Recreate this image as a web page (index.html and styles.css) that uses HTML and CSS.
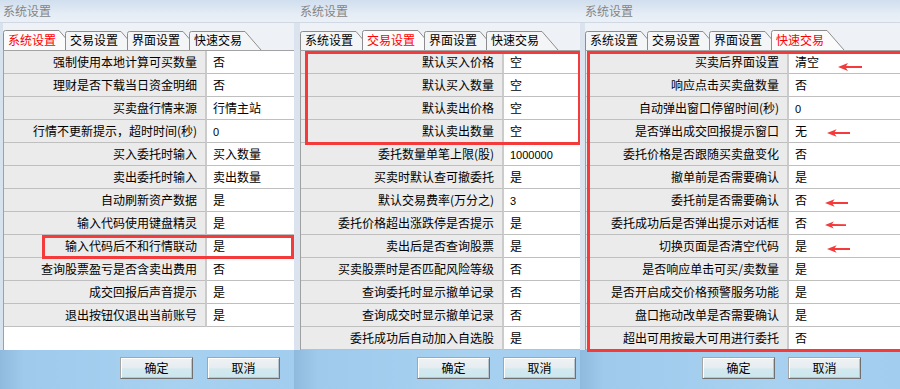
FILE: index.html
```html
<!DOCTYPE html>
<html lang="zh-CN">
<head>
<meta charset="utf-8">
<title>系统设置</title>
<link rel="stylesheet" href="styles.css">
</head>
<body>
<div class="screen">

  <section class="panel p1">
    <div class="titlebar">系统设置</div>
    <div class="body">
      <div class="tabs">
        <div class="tab active"><svg width="74" height="20" viewBox="0 0 74 20"><path class="tf" d="M0.5 20V2.5Q0.5 0.5 2.5 0.5H56L73 20Z"/><path class="ts" d="M0.5 20V2.5Q0.5 0.5 2.5 0.5H56L73 20"/></svg><span>系统设置</span></div>
        <div class="tab"><svg width="74" height="20" viewBox="0 0 74 20"><path class="tf" d="M0.5 20V3.5Q0.5 1.5 2.5 1.5H56L72 20Z"/><path class="ts" d="M0.5 20V3.5Q0.5 1.5 2.5 1.5H56L72 20"/></svg><span>交易设置</span></div>
        <div class="tab"><svg width="74" height="20" viewBox="0 0 74 20"><path class="tf" d="M0.5 20V3.5Q0.5 1.5 2.5 1.5H56L72 20Z"/><path class="ts" d="M0.5 20V3.5Q0.5 1.5 2.5 1.5H56L72 20"/></svg><span>界面设置</span></div>
        <div class="tab"><svg width="74" height="20" viewBox="0 0 74 20"><path class="tf" d="M0.5 20V3.5Q0.5 1.5 2.5 1.5H56L72 20Z"/><path class="ts" d="M0.5 20V3.5Q0.5 1.5 2.5 1.5H56L72 20"/></svg><span>快速交易</span></div>
      </div>
      <div class="list">
        <div class="row"><div class="lbl">强制使用本地计算可买数量</div><div class="val">否</div></div>
        <div class="row"><div class="lbl">理财是否下载当日资金明细</div><div class="val">否</div></div>
        <div class="row"><div class="lbl">买卖盘行情来源</div><div class="val">行情主站</div></div>
        <div class="row"><div class="lbl">行情不更新提示，超时时间(秒)</div><div class="val"><span class="num">0</span></div></div>
        <div class="row"><div class="lbl">买入委托时输入</div><div class="val">买入数量</div></div>
        <div class="row"><div class="lbl">卖出委托时输入</div><div class="val">卖出数量</div></div>
        <div class="row"><div class="lbl">自动刷新资产数据</div><div class="val">是</div></div>
        <div class="row"><div class="lbl">输入代码使用键盘精灵</div><div class="val">是</div></div>
        <div class="row"><div class="lbl">输入代码后不和行情联动</div><div class="val">是</div></div>
        <div class="row"><div class="lbl">查询股票盈亏是否含卖出费用</div><div class="val">否</div></div>
        <div class="row"><div class="lbl">成交回报后声音提示</div><div class="val">是</div></div>
        <div class="row"><div class="lbl">退出按钮仅退出当前账号</div><div class="val">是</div></div>
      </div>
    </div>
    <div class="footer"><button class="btn">确定</button><button class="btn">取消</button></div>
    <div class="box box1"></div>
  </section>

  <section class="panel p2">
    <div class="titlebar">系统设置</div>
    <div class="body">
      <div class="tabs">
        <div class="tab"><svg width="74" height="20" viewBox="0 0 74 20"><path class="tf" d="M0.5 20V3.5Q0.5 1.5 2.5 1.5H56L72 20Z"/><path class="ts" d="M0.5 20V3.5Q0.5 1.5 2.5 1.5H56L72 20"/></svg><span>系统设置</span></div>
        <div class="tab active"><svg width="74" height="20" viewBox="0 0 74 20"><path class="tf" d="M0.5 20V2.5Q0.5 0.5 2.5 0.5H56L73 20Z"/><path class="ts" d="M0.5 20V2.5Q0.5 0.5 2.5 0.5H56L73 20"/></svg><span>交易设置</span></div>
        <div class="tab"><svg width="74" height="20" viewBox="0 0 74 20"><path class="tf" d="M0.5 20V3.5Q0.5 1.5 2.5 1.5H56L72 20Z"/><path class="ts" d="M0.5 20V3.5Q0.5 1.5 2.5 1.5H56L72 20"/></svg><span>界面设置</span></div>
        <div class="tab"><svg width="74" height="20" viewBox="0 0 74 20"><path class="tf" d="M0.5 20V3.5Q0.5 1.5 2.5 1.5H56L72 20Z"/><path class="ts" d="M0.5 20V3.5Q0.5 1.5 2.5 1.5H56L72 20"/></svg><span>快速交易</span></div>
      </div>
      <div class="list">
        <div class="row"><div class="lbl">默认买入价格</div><div class="val">空</div></div>
        <div class="row"><div class="lbl">默认买入数量</div><div class="val">空</div></div>
        <div class="row"><div class="lbl">默认卖出价格</div><div class="val">空</div></div>
        <div class="row"><div class="lbl">默认卖出数量</div><div class="val">空</div></div>
        <div class="row"><div class="lbl">委托数量单笔上限(股)</div><div class="val"><span class="num">1000000</span></div></div>
        <div class="row"><div class="lbl">买卖时默认查可撤委托</div><div class="val">是</div></div>
        <div class="row"><div class="lbl">默认交易费率(万分之)</div><div class="val"><span class="num">3</span></div></div>
        <div class="row"><div class="lbl">委托价格超出涨跌停是否提示</div><div class="val">是</div></div>
        <div class="row"><div class="lbl">卖出后是否查询股票</div><div class="val">是</div></div>
        <div class="row"><div class="lbl">买卖股票时是否匹配风险等级</div><div class="val">否</div></div>
        <div class="row"><div class="lbl">查询委托时显示撤单记录</div><div class="val">否</div></div>
        <div class="row"><div class="lbl">查询成交时显示撤单记录</div><div class="val">否</div></div>
        <div class="row"><div class="lbl">委托成功后自动加入自选股</div><div class="val">是</div></div>
      </div>
    </div>
    <div class="footer"><button class="btn">确定</button><button class="btn">取消</button></div>
    <div class="box box2"></div>
  </section>

  <section class="panel p3">
    <div class="titlebar">系统设置</div>
    <div class="body">
      <div class="tabs">
        <div class="tab"><svg width="74" height="20" viewBox="0 0 74 20"><path class="tf" d="M0.5 20V3.5Q0.5 1.5 2.5 1.5H56L72 20Z"/><path class="ts" d="M0.5 20V3.5Q0.5 1.5 2.5 1.5H56L72 20"/></svg><span>系统设置</span></div>
        <div class="tab"><svg width="74" height="20" viewBox="0 0 74 20"><path class="tf" d="M0.5 20V3.5Q0.5 1.5 2.5 1.5H56L72 20Z"/><path class="ts" d="M0.5 20V3.5Q0.5 1.5 2.5 1.5H56L72 20"/></svg><span>交易设置</span></div>
        <div class="tab"><svg width="74" height="20" viewBox="0 0 74 20"><path class="tf" d="M0.5 20V3.5Q0.5 1.5 2.5 1.5H56L72 20Z"/><path class="ts" d="M0.5 20V3.5Q0.5 1.5 2.5 1.5H56L72 20"/></svg><span>界面设置</span></div>
        <div class="tab active"><svg width="74" height="20" viewBox="0 0 74 20"><path class="tf" d="M0.5 20V2.5Q0.5 0.5 2.5 0.5H56L73 20Z"/><path class="ts" d="M0.5 20V2.5Q0.5 0.5 2.5 0.5H56L73 20"/></svg><span>快速交易</span></div>
      </div>
      <div class="list">
        <div class="row"><div class="lbl">买卖后界面设置</div><div class="val">清空</div></div>
        <div class="row"><div class="lbl">响应点击买卖盘数量</div><div class="val">否</div></div>
        <div class="row"><div class="lbl">自动弹出窗口停留时间(秒)</div><div class="val"><span class="num">0</span></div></div>
        <div class="row"><div class="lbl">是否弹出成交回报提示窗口</div><div class="val">无</div></div>
        <div class="row"><div class="lbl">委托价格是否跟随买卖盘变化</div><div class="val">否</div></div>
        <div class="row"><div class="lbl">撤单前是否需要确认</div><div class="val">是</div></div>
        <div class="row"><div class="lbl">委托前是否需要确认</div><div class="val">否</div></div>
        <div class="row"><div class="lbl">委托成功后是否弹出提示对话框</div><div class="val">否</div></div>
        <div class="row"><div class="lbl">切换页面是否清空代码</div><div class="val">是</div></div>
        <div class="row"><div class="lbl">是否响应单击可买/卖数量</div><div class="val">是</div></div>
        <div class="row"><div class="lbl">是否开启成交价格预警服务功能</div><div class="val">是</div></div>
        <div class="row"><div class="lbl">盘口拖动改单是否需要确认</div><div class="val">是</div></div>
        <div class="row"><div class="lbl">超出可用按最大可用进行委托</div><div class="val">否</div></div>
      </div>
    </div>
    <div class="footer"><button class="btn">确定</button><button class="btn">取消</button></div>
    <div class="box box3"></div>
    <svg class="arrow a1" viewBox="0 0 24 8"><path d="M0 4L10 0L8 2.9L24 3V5L8 5.1L10 8Z"/></svg>
    <svg class="arrow a2" viewBox="0 0 24 8"><path d="M0 4L10 0L8 2.9L24 3V5L8 5.1L10 8Z"/></svg>
    <svg class="arrow a3" viewBox="0 0 24 8"><path d="M0 4L10 0L8 2.9L24 3V5L8 5.1L10 8Z"/></svg>
    <svg class="arrow a4" viewBox="0 0 24 8"><path d="M0 4L10 0L8 2.9L24 3V5L8 5.1L10 8Z"/></svg>
    <svg class="arrow a5" viewBox="0 0 24 8"><path d="M0 4L10 0L8 2.9L24 3V5L8 5.1L10 8Z"/></svg>
  </section>

</div>
</body>
</html>
```

FILE: styles.css
```css
html, body {
  margin: 0;
  padding: 0;
}
body {
  width: 900px;
  height: 389px;
  overflow: hidden;
  background: #9ac6ea;
  font-family: "Noto Sans CJK SC", "Noto Sans", sans-serif;
  font-size: 12px;
  color: #000;
}
.screen {
  display: flex;
  height: 389px;
}
.panel {
  position: relative;
  flex: none;
  display: flex;
  flex-direction: column;
  height: 389px;
}
.p1 { width: 294px; }
.p2 { width: 286px; }
.p3 { width: 320px; }

.titlebar {
  height: 23px;
  box-sizing: border-box;
  border-bottom: 1px solid #d0d9e3;
  background: linear-gradient(#d0deee, #e4ecf5 60%, #ebf0f6);
  color: #858585;
  line-height: 22px;
  white-space: nowrap;
}
.p1 .titlebar { padding-left: 3px; }
.p2 .titlebar { padding-left: 6px; }
.p3 .titlebar { padding-left: 5px; }

.body {
  display: flex;
  flex-direction: column;
  background: #eef1f5;
}
.p1 .body { border-left: 3px solid #d6e2ee; }
.p2 .body { border-left: 6px solid #dbe4ee; }
.p3 .body { border-left: 5px solid #dbe4ee; }

.tabs {
  height: 27px;
  display: flex;
  align-items: flex-end;
}
.tab {
  position: relative;
  flex: none;
  width: 62px;
  height: 20px;
}
.tab svg {
  position: absolute;
  left: 0;
  top: 0;
}
.tab .tf { fill: #f4f5f7; }
.tab.active .tf { fill: #fbfbfc; }
.tab .ts { fill: none; stroke: #8d8d8d; stroke-width: 1; }
.tab span {
  position: relative;
  display: block;
  padding: 2px 0 0 5px;
  line-height: 16px;
  white-space: nowrap;
}
.tab.active span { color: #ff0000; }

.list {
  height: 300px;
  box-sizing: border-box;
  border-top: 1px solid #a3a3a3;
  border-left: 1px solid #a0a0a0;
  background: #fff;
  overflow: hidden;
}
.row {
  display: grid;
  grid-template-columns: 203px 1fr;
  height: 23px;
}
.lbl, .val {
  box-sizing: border-box;
  height: 23px;
  line-height: 22px;
  border-bottom: 1px solid #bfbfbf;
  white-space: nowrap;
}
.lbl {
  background: #ebebeb;
  border-right: 2px solid #cbcbcb;
  text-align: right;
  padding-right: 8px;
}
.val {
  padding-left: 6px;
  overflow: hidden;
}
.num {
  font-family: "Liberation Sans", Arial, sans-serif;
  font-size: 11px;
}

.footer {
  height: 39px;
  box-sizing: border-box;
  padding-top: 7px;
  display: flex;
  align-items: flex-start;
  gap: 14px;
  background: linear-gradient(90deg, #8fbadd 0, #9fcaec 24px, #a8d1f0 60%, #a2cdef 100%);
}
.p1 .footer { padding-left: 120px; gap: 14px; }
.p2 .footer { padding-left: 123px; gap: 13px; }
.p3 .footer { padding-left: 122px; gap: 13px; }

.btn {
  box-sizing: border-box;
  width: 73px;
  height: 22px;
  margin: 0;
  padding: 0;
  border: 1px solid #a6a6a6;
  border-right-color: #707070;
  border-bottom-color: #707070;
  box-shadow: inset 1px 1px 0 #ffffff, inset -1px -1px 0 #b9c4cc;
  background: linear-gradient(#eef2f5 0, #e6ecf0 50%, #d2e9ef 54%, #cce6ed 100%);
  font-family: "Noto Sans CJK SC", sans-serif;
  font-size: 12px;
  line-height: 20px;
  color: #000;
}

.box {
  position: absolute;
  box-sizing: border-box;
  border: 3px solid #f43a3a;
  pointer-events: none;
}
.box1 { left: 42px; top: 235px; width: 252px; height: 24px; }
.box2 { left: 11px; top: 51px; width: 276px; height: 94px; }
.box3 { left: 7px; top: 51px; width: 340px; height: 301px; }

.arrow {
  position: absolute;
  width: 23px;
  height: 8px;
  fill: #f43a3a;
}
.a1 { left: 258px; top: 63px; width: 24px; }
.a2 { left: 247px; top: 129px; }
.a3 { left: 245px; top: 199px; }
.a4 { left: 245px; top: 221px; width: 21px; }
.a5 { left: 247px; top: 245px; }
```
